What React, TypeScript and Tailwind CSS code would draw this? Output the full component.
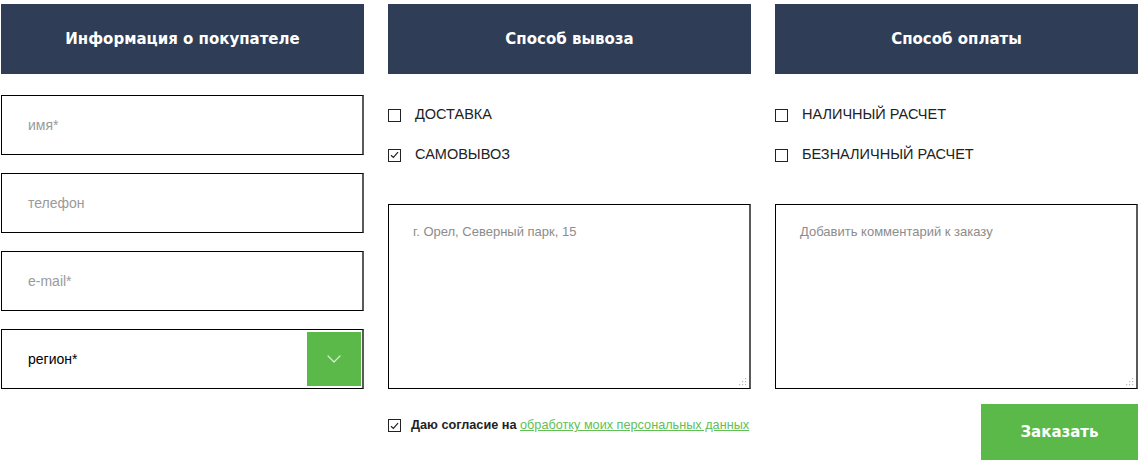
import { ChevronDown } from "lucide-react";

const heading = "font-['DejaVu_Sans',Verdana,sans-serif] font-bold text-[15px] text-white";
const body = "font-['Liberation_Sans',Arial,sans-serif]";

function Header(props: { title: string }) {
  return (
    <div className={`h-[70px] bg-[#2f3d56] flex items-center justify-center ${heading}`}>
      {props.title}
    </div>
  );
}

function Field(props: { placeholder: string }) {
  return (
    <div className="h-[60px] border border-black border-r-2 border-r-[#5a5a5a] flex items-center pl-[26px]">
      <span className={`${body} text-[14px] text-[#9a9a9a]`}>{props.placeholder}</span>
    </div>
  );
}

function Box(props: { checked?: boolean }) {
  return (
    <span className="w-[13px] h-[13px] border border-[#222] flex items-center justify-center shrink-0">
      {props.checked && (
        <svg width="9" height="8" viewBox="0 0 9 8" fill="none">
          <path d="M1 4.2L3.4 6.5L8 1.2" stroke="#222" strokeWidth="1.2" />
        </svg>
      )}
    </span>
  );
}

function Option(props: { label: string; checked?: boolean }) {
  return (
    <div className="h-[20px] flex items-center gap-[14px]">
      <Box checked={props.checked} />
      <span className={`${body} text-[14.5px] text-[#222]`}>{props.label}</span>
    </div>
  );
}

function Comment(props: { text: string }) {
  return (
    <div className="relative h-[185px] border border-black border-r-2 border-r-[#5a5a5a] pl-6 pt-[13px]">
      <span className={`${body} text-[13px] text-[#8c8c8c]`}>{props.text}</span>
      <svg className="absolute right-[2px] bottom-[2px]" width="8" height="8" viewBox="0 0 8 8">
        <g fill="#bbb">
          <rect x="6" y="0" width="1.2" height="1.2" />
          <rect x="3" y="3" width="1.2" height="1.2" />
          <rect x="6" y="3" width="1.2" height="1.2" />
          <rect x="0" y="6" width="1.2" height="1.2" />
          <rect x="3" y="6" width="1.2" height="1.2" />
          <rect x="6" y="6" width="1.2" height="1.2" />
        </g>
      </svg>
    </div>
  );
}

export default function App() {
  return (
    <div className="w-[1140px] h-[464px] bg-white pt-1 pl-px pr-[2px] grid grid-cols-3 gap-x-6">
      <div className="flex flex-col">
        <Header title="Информация о покупателе" />
        <div className="mt-[21px] flex flex-col gap-[18px]">
          <Field placeholder="имя*" />
          <Field placeholder="телефон" />
          <Field placeholder="e-mail*" />
          <div className="h-[60px] border border-black border-r-2 border-r-[#5a5a5a] flex items-center justify-between pl-[26px] pr-px">
            <span className={`${body} text-[14px] text-black`}>регион*</span>
            <div className="w-[54px] h-[54px] bg-[#5bb94a] flex items-center justify-center">
              <ChevronDown className="w-6 h-6 text-[#d8f0d2]" strokeWidth={1.2} />
            </div>
          </div>
        </div>
      </div>

      <div className="flex flex-col">
        <Header title="Способ вывоза" />
        <div className="mt-[31px] flex flex-col gap-5">
          <Option label="ДОСТАВКА" />
          <Option label="САМОВЫВОЗ" checked />
        </div>
        <div className="mt-[39px]">
          <Comment text="г. Орел, Северный парк, 15" />
        </div>
        <div className="mt-[27px] flex items-center gap-[10px] whitespace-nowrap">
          <Box checked />
          <span className={`${body} text-[12.7px] text-[#222]`}>
            <span className="font-bold">Даю согласие на </span>
            <a className="text-[#62bf55] underline" href="#">
              обработку моих персональных данных
            </a>
          </span>
        </div>
      </div>

      <div className="flex flex-col">
        <Header title="Способ оплаты" />
        <div className="mt-[31px] flex flex-col gap-5">
          <Option label="НАЛИЧНЫЙ РАСЧЕТ" />
          <Option label="БЕЗНАЛИЧНЫЙ РАСЧЕТ" />
        </div>
        <div className="mt-[39px]">
          <Comment text="Добавить комментарий к заказу" />
        </div>
        <div className="mt-[15px] flex justify-end">
          <button className={`w-[157px] h-[56px] bg-[#5bb94a] ${heading}`}>Заказать</button>
        </div>
      </div>
    </div>
  );
}
